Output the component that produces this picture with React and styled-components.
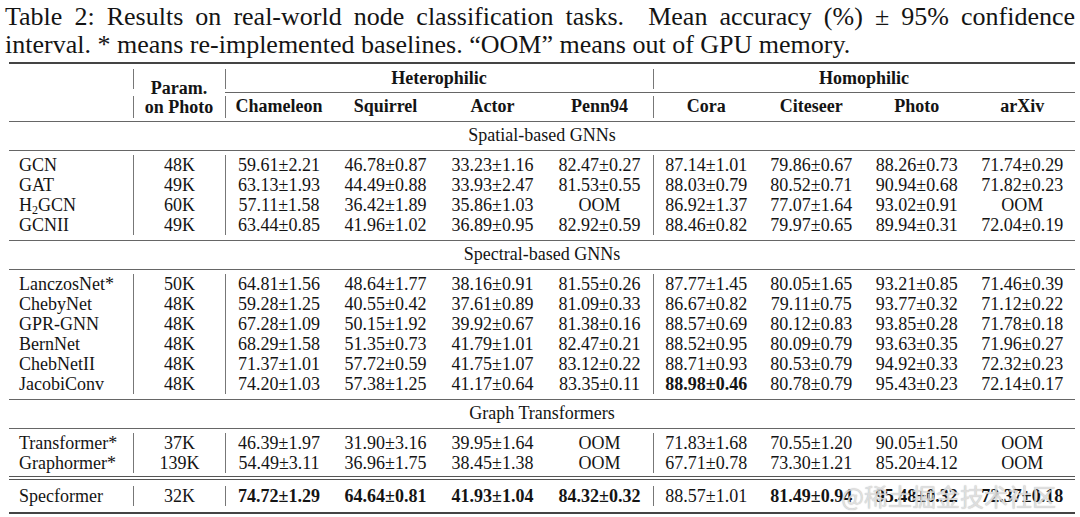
import styled, { createGlobalStyle } from "styled-components";

const GlobalStyle = createGlobalStyle`
  html, body {
    margin: 0;
    padding: 0;
    background: #fff;
  }
  body {
    font-family: "Liberation Serif", "Times New Roman", serif;
    color: #141414;
  }
`;

const COLS = "124px 92px repeat(4, 107px) repeat(4, 105.5px)";

const Page = styled.div`
  position: relative;
  width: 1080px;
  height: 517px;
  overflow: hidden;
`;

const Caption = styled.p`
  margin: 0;
  box-sizing: border-box;
  height: 62px;
  padding: 3px 5px 0 5px;
  font-size: 26px;
  line-height: 28px;
  text-align: justify;
  text-align-last: left;
`;

const Table = styled.div`
  display: flex;
  flex-direction: column;
  margin: 0 5px 0 9px;
  font-size: 18px;
`;

const Rule = styled.div`
  height: ${(p) => p.$h || 1}px;
  background: ${(p) => p.$color || "#555"};
`;

const DoubleRule = styled.div`
  height: 2px;
  border-top: 1px solid #555;
  border-bottom: 1px solid #555;
`;

const Header = styled.div`
  display: grid;
  grid-template-columns: ${COLS};
  grid-template-rows: 28px 1px 28px;
  font-weight: 700;
`;

const Group = styled.div`
  grid-column: ${(p) => p.$cols};
  grid-row: 1;
  text-align: center;
  line-height: 20px;
  padding-top: 4px;
`;

const CMidRule = styled.div`
  grid-column: 3 / 11;
  grid-row: 2;
  background: #666;
`;

const HeadDivider = styled.div`
  grid-column: ${(p) => p.$col};
  grid-row: ${(p) => p.$row};
  border-left: 1px solid #777;
  margin: ${(p) => (p.$row === 1 ? "5px 0 3px" : "3px 0 3px")};
`;

const ParamLabel = styled.div`
  grid-column: 2;
  grid-row: 1 / 4;
  display: flex;
  flex-direction: column;
  justify-content: flex-end;
  align-items: center;
  line-height: 19px;
  padding-bottom: 4px;
`;

const ColName = styled.div`
  grid-row: 3;
  grid-column: ${(p) => p.$col};
  text-align: center;
  line-height: 20px;
  border-left: ${(p) => (p.$divider ? "1px solid #777" : "none")};
  margin: ${(p) => (p.$divider ? "3px 0 3px" : "0")};
  padding-top: ${(p) => (p.$divider ? "0" : "3px")};
`;

const GroupTitle = styled.div`
  text-align: center;
  line-height: 20px;
  padding: 3px 0 5px;
`;

const Block = styled.div`
  padding: ${(p) => p.$pad || "4px 0 5px"};
`;

const Row = styled.div`
  display: grid;
  grid-template-columns: ${COLS};
  height: 20px;
  line-height: 20px;
`;

const Cell = styled.div`
  text-align: ${(p) => (p.$left ? "left" : "center")};
  padding-left: ${(p) => (p.$left ? "10px" : "0")};
  border-left: ${(p) => (p.$divider ? "1px solid #777" : "none")};
  font-weight: ${(p) => (p.$bold ? 700 : 400)};
  white-space: nowrap;

  sub {
    font-size: 12px;
    line-height: 0;
    vertical-align: -3px;
  }
`;

const Watermark = styled.div`
  position: absolute;
  right: 24px;
  bottom: 9px;
  font-family: "Noto Sans CJK SC", "Noto Sans", sans-serif;
  font-size: 24px;
  line-height: 24px;
  color: rgba(238, 238, 238, 0.75);
  text-shadow: 0 0 1px rgba(110, 110, 110, 0.6);
  pointer-events: none;
`;

const spatial = [
  ["GCN", "48K", "59.61±2.21", "46.78±0.87", "33.23±1.16", "82.47±0.27", "87.14±1.01", "79.86±0.67", "88.26±0.73", "71.74±0.29"],
  ["GAT", "49K", "63.13±1.93", "44.49±0.88", "33.93±2.47", "81.53±0.55", "88.03±0.79", "80.52±0.71", "90.94±0.68", "71.82±0.23"],
  [<>H<sub>2</sub>GCN</>, "60K", "57.11±1.58", "36.42±1.89", "35.86±1.03", "OOM", "86.92±1.37", "77.07±1.64", "93.02±0.91", "OOM"],
  ["GCNII", "49K", "63.44±0.85", "41.96±1.02", "36.89±0.95", "82.92±0.59", "88.46±0.82", "79.97±0.65", "89.94±0.31", "72.04±0.19"],
];

const spectral = [
  ["LanczosNet*", "50K", "64.81±1.56", "48.64±1.77", "38.16±0.91", "81.55±0.26", "87.77±1.45", "80.05±1.65", "93.21±0.85", "71.46±0.39"],
  ["ChebyNet", "48K", "59.28±1.25", "40.55±0.42", "37.61±0.89", "81.09±0.33", "86.67±0.82", "79.11±0.75", "93.77±0.32", "71.12±0.22"],
  ["GPR-GNN", "48K", "67.28±1.09", "50.15±1.92", "39.92±0.67", "81.38±0.16", "88.57±0.69", "80.12±0.83", "93.85±0.28", "71.78±0.18"],
  ["BernNet", "48K", "68.29±1.58", "51.35±0.73", "41.79±1.01", "82.47±0.21", "88.52±0.95", "80.09±0.79", "93.63±0.35", "71.96±0.27"],
  ["ChebNetII", "48K", "71.37±1.01", "57.72±0.59", "41.75±1.07", "83.12±0.22", "88.71±0.93", "80.53±0.79", "94.92±0.33", "72.32±0.23"],
  ["JacobiConv", "48K", "74.20±1.03", "57.38±1.25", "41.17±0.64", "83.35±0.11", "88.98±0.46", "80.78±0.79", "95.43±0.23", "72.14±0.17"],
];

const transformers = [
  ["Transformer*", "37K", "46.39±1.97", "31.90±3.16", "39.95±1.64", "OOM", "71.83±1.68", "70.55±1.20", "90.05±1.50", "OOM"],
  ["Graphormer*", "139K", "54.49±3.11", "36.96±1.75", "38.45±1.38", "OOM", "67.71±0.78", "73.30±1.21", "85.20±4.12", "OOM"],
];

const ours = ["Specformer", "32K", "74.72±1.29", "64.64±0.81", "41.93±1.04", "84.32±0.32", "88.57±1.01", "81.49±0.94", "95.48±0.32", "72.37±0.18"];

// bold cells, keyed by "model-column"
const boldCells = {
  "JacobiConv-6": true,
  "Specformer-2": true,
  "Specformer-3": true,
  "Specformer-4": true,
  "Specformer-5": true,
  "Specformer-7": true,
  "Specformer-8": true,
  "Specformer-9": true,
};

const columns = ["Chameleon", "Squirrel", "Actor", "Penn94", "Cora", "Citeseer", "Photo", "arXiv"];

const DataRow = ({ row }) => {
  const name = typeof row[0] === "string" ? row[0] : "H2GCN";
  return (
    <Row>
      {row.map((v, i) => (
        <Cell
          key={i}
          $left={i === 0}
          $divider={i === 1 || i === 2 || i === 6}
          $bold={boldCells[`${name}-${i}`]}
        >
          {v}
        </Cell>
      ))}
    </Row>
  );
};

const App = () => {
  return (
    <Page>
      <GlobalStyle />
      <Caption>
        Table 2: Results on real-world node classification tasks.&nbsp; Mean accuracy (%) ± 95% confidence
        interval. * means re-implemented baselines. “OOM” means out of GPU memory.
      </Caption>
      <Table>
        <Rule $h={2} $color="#444" />
        <Header>
          <HeadDivider $col={2} $row={1} />
          <HeadDivider $col={3} $row={1} />
          <HeadDivider $col={7} $row={1} />
          <Group $cols="3 / 7">Heterophilic</Group>
          <Group $cols="7 / 11">Homophilic</Group>
          <CMidRule />
          <HeadDivider $col={2} $row={3} />
          <ParamLabel>
            <span>Param.</span>
            <span>on Photo</span>
          </ParamLabel>
          {columns.map((c, i) => (
            <ColName key={c} $col={i + 3} $divider={i === 0 || i === 4}>
              {c}
            </ColName>
          ))}
        </Header>
        <Rule $color="#666" />
        <GroupTitle>Spatial-based GNNs</GroupTitle>
        <Rule $color="#666" />
        <Block>
          {spatial.map((r, i) => (
            <DataRow key={i} row={r} />
          ))}
        </Block>
        <Rule $color="#666" />
        <GroupTitle>Spectral-based GNNs</GroupTitle>
        <Rule $color="#666" />
        <Block>
          {spectral.map((r, i) => (
            <DataRow key={i} row={r} />
          ))}
        </Block>
        <Rule $color="#666" />
        <GroupTitle>Graph Transformers</GroupTitle>
        <Rule $color="#666" />
        <Block $pad="4px 0 3px">
          {transformers.map((r, i) => (
            <DataRow key={i} row={r} />
          ))}
        </Block>
        <DoubleRule />
        <Block $pad="6px 0 6px">
          <DataRow row={ours} />
        </Block>
        <Rule $h={2} $color="#444" />
      </Table>
      <Watermark>@稀土掘金技术社区</Watermark>
    </Page>
  );
};

export default App;
